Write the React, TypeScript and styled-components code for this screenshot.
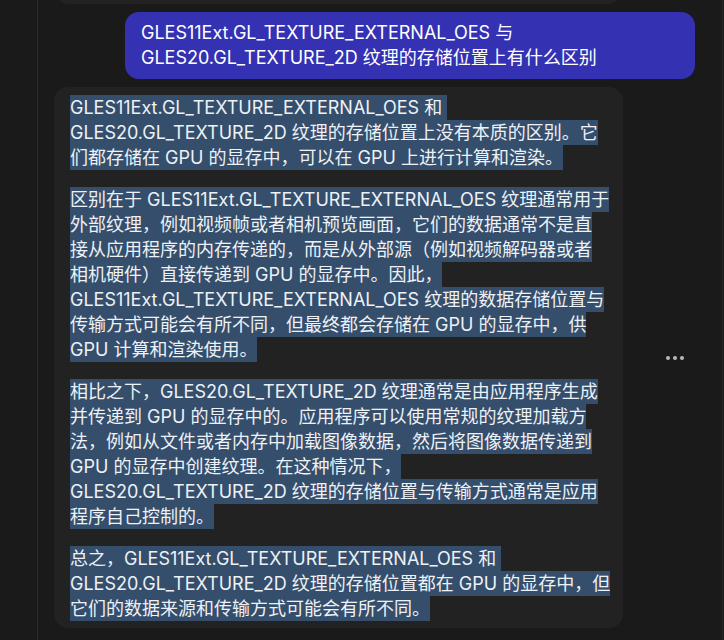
import React from 'react';
import styled, { createGlobalStyle } from 'styled-components';

const GlobalStyle = createGlobalStyle`
  html, body {
    margin: 0;
    padding: 0;
    background: #1a1a1a;
    overflow: hidden;
  }
  body {
    font-family: Inter, "Noto Sans CJK SC", "Noto Sans", sans-serif;
    -webkit-font-smoothing: antialiased;
  }
`;

const Page = styled.div`
  display: flex;
  width: 724px;
  height: 640px;
  overflow: hidden;
  background: #1a1a1a;
`;

const Sidebar = styled.div`
  width: 37px;
  flex-shrink: 0;
  border-right: 1px solid #2c2c2c;
`;

const Chat = styled.div`
  flex: 1;
  margin-right: 1px;
  border-right: 1px solid #262626;
  overflow: hidden;
`;

const Messages = styled.div`
  display: flex;
  flex-direction: column;
  gap: 8px;
  margin-top: -36px;
  padding: 0 27px 0 16px;
`;

const PrevCard = styled.div`
  width: 567px;
  height: 40px;
  margin-left: 1px;
  background: #222222;
  border-radius: 14px;
`;

const UserBubble = styled.div`
  align-self: flex-end;
  box-sizing: border-box;
  width: 570px;
  padding: 8px 16px 9px;
  background: #3431b3;
  border-radius: 14px;
  color: #ffffff;
  font-size: 18px;
  line-height: 25px;
`;

const AssistantRow = styled.div`
  display: flex;
  align-items: center;
`;

const AssistantBubble = styled.div`
  box-sizing: border-box;
  width: 569px;
  flex-shrink: 0;
  padding: 8px 16px 7px;
  background: #222222;
  border-radius: 14px;
  display: flex;
  flex-direction: column;
  gap: 17px;
`;

const Paragraph = styled.div`
  display: flex;
  flex-direction: column;
  align-items: flex-start;
`;

const Line = styled.span`
  display: block;
  white-space: pre;
  height: 25px;
  line-height: 25px;
  font-size: 18px;
  color: #eef1f5;
  background: #344e6c;
`;

const MoreButton = styled.button`
  margin-left: 42px;
  padding: 0;
  border: none;
  background: transparent;
  display: flex;
  align-items: center;
  cursor: pointer;
`;

const paragraphs: string[][] = [
  [
    'GLES11Ext.GL_TEXTURE_EXTERNAL_OES 和 ',
    'GLES20.GL_TEXTURE_2D 纹理的存储位置上没有本质的区别。它',
    '们都存储在 GPU 的显存中，可以在 GPU 上进行计算和渲染。',
  ],
  [
    '区别在于 GLES11Ext.GL_TEXTURE_EXTERNAL_OES 纹理通常用于',
    '外部纹理，例如视频帧或者相机预览画面，它们的数据通常不是直',
    '接从应用程序的内存传递的，而是从外部源（例如视频解码器或者',
    '相机硬件）直接传递到 GPU 的显存中。因此，',
    'GLES11Ext.GL_TEXTURE_EXTERNAL_OES 纹理的数据存储位置与',
    '传输方式可能会有所不同，但最终都会存储在 GPU 的显存中，供',
    'GPU 计算和渲染使用。',
  ],
  [
    '相比之下，GLES20.GL_TEXTURE_2D 纹理通常是由应用程序生成',
    '并传递到 GPU 的显存中的。应用程序可以使用常规的纹理加载方',
    '法，例如从文件或者内存中加载图像数据，然后将图像数据传递到',
    'GPU 的显存中创建纹理。在这种情况下，',
    'GLES20.GL_TEXTURE_2D 纹理的存储位置与传输方式通常是应用',
    '程序自己控制的。',
  ],
  [
    '总之，GLES11Ext.GL_TEXTURE_EXTERNAL_OES 和 ',
    'GLES20.GL_TEXTURE_2D 纹理的存储位置都在 GPU 的显存中，但',
    '它们的数据来源和传输方式可能会有所不同。',
  ],
];

const App: React.FC = () => {
  return (
    <>
      <GlobalStyle />
      <Page>
        <Sidebar />
        <Chat>
          <Messages>
            <PrevCard />
            <UserBubble>
              GLES11Ext.GL_TEXTURE_EXTERNAL_OES 与
              <br />
              GLES20.GL_TEXTURE_2D 纹理的存储位置上有什么区别
            </UserBubble>
            <AssistantRow>
              <AssistantBubble>
                {paragraphs.map((lines, i) => (
                  <Paragraph key={i}>
                    {lines.map((line, j) => (
                      <Line key={j}>{line}</Line>
                    ))}
                  </Paragraph>
                ))}
              </AssistantBubble>
              <MoreButton aria-label="More">
                <svg width="20" height="6" viewBox="0 0 20 6">
                  <circle cx="3" cy="3" r="2" fill="#b9b9b9" />
                  <circle cx="10" cy="3" r="2" fill="#b9b9b9" />
                  <circle cx="17" cy="3" r="2" fill="#b9b9b9" />
                </svg>
              </MoreButton>
            </AssistantRow>
          </Messages>
        </Chat>
      </Page>
    </>
  );
};

export default App;
